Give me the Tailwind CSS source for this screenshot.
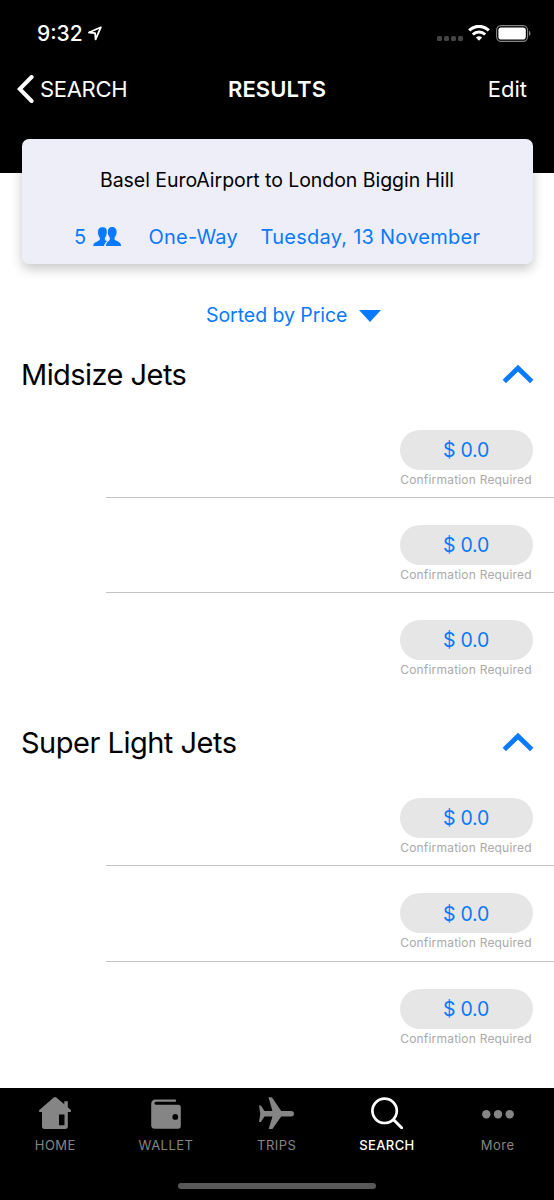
<!DOCTYPE html>
<html lang="en">
<head>
<meta charset="utf-8">
<meta name="viewport" content="width=device-width, initial-scale=1">
<title>Results</title>
<script src="https://cdn.jsdelivr.net/npm/@tailwindcss/browser@4"></script>
</head>
<body class="bg-white">
<div class="flex h-[1200px] w-[554px] flex-col overflow-hidden bg-white font-['Inter','Liberation_Sans',sans-serif] text-black">

  <header class="h-[172.5px] shrink-0 bg-black text-white">
    <div class="flex h-[66px] items-center justify-between pr-[22px] pl-[37px]">
      <div class="flex items-center gap-[5px]">
        <span class="pt-px text-[21px] leading-6 font-medium">9:32</span>
        <svg class="h-[15px] w-[14px]" viewBox="0 0 14 15" fill="none" stroke="white" stroke-width="1.8" stroke-linejoin="round"><path d="M12.8 1.300.9 6.500l6.200.7.500 6.200z"/></svg>
      </div>
      <div class="flex items-center">
        <div class="mt-[11px] flex gap-[2px]">
          <i class="size-[5px] rounded-[1.5px] bg-[#444]"></i><i class="size-[5px] rounded-[1.5px] bg-[#444]"></i><i class="size-[5px] rounded-[1.5px] bg-[#444]"></i><i class="size-[5px] rounded-[1.5px] bg-[#444]"></i>
        </div>
        <svg class="ml-[5px] h-[16px] w-[22px]" viewBox="0 0 22 16" fill="none" stroke="white"><path stroke-width="3.2" d="M1.2 5.400a14 14 0 0 1 19.600 0"/><path stroke-width="3" d="M4.800 9.500a9 9 0 0 1 12.400 0"/><path fill="white" stroke="none" d="M7.900 12.600a4.600 4.600 0 0 1 6.200 0L11 15.800z"/></svg>
        <svg class="ml-[6px] h-[17px] w-[36px]" viewBox="0 0 36 17"><rect x=".6" y=".6" width="31" height="15.8" rx="4.6" fill="none" stroke="#858585" stroke-width="1.1"/><rect x="2.4" y="2.4" width="27.4" height="12.2" rx="2.8" fill="white"/><path d="M33 5.800a3 3 0 0 1 0 5.200z" fill="#858585"/></svg>
      </div>
    </div>
    <div class="grid h-[46px] grid-cols-3 items-center pr-[27px] pl-[17px] text-[22px] leading-7">
      <div class="flex items-center gap-[6px]">
        <svg class="h-[29px] w-[17px] shrink-0" viewBox="0 0 17 29" fill="none" stroke="white" stroke-width="4" stroke-linecap="round"><path d="M14.600 2 2.700 14l11.900 12"/></svg>
        <span class="tracking-[-0.3px]">SEARCH</span>
      </div>
      <h1 class="pl-[10px] text-center font-semibold tracking-[0.1px]">RESULTS</h1>
      <span class="text-right">Edit</span>
    </div>
  </header>

  <main class="flex-1">
    <section class="mx-[21.5px] -mt-[33.5px] h-[125px] rounded-[7px] bg-[#eeeef8] pt-[28px] shadow-[0_5px_12px_rgba(0,0,0,0.22)]">
      <p class="text-center text-[19.5px] leading-[26px] tracking-[-0.05px]">Basel EuroAirport to London Biggin Hill</p>
      <div class="mt-[31px] flex items-center pl-[52.5px] text-[20px] leading-[26px] tracking-[0.25px] text-[#087aff]">
        <span>5</span>
        <svg class="-mt-px ml-[7px] h-[19px] w-[28px]" viewBox="0 0 28 19" fill="currentColor"><path d="M18.800 0c3.200 0 5 2 4.800 5.200-.1 2-.7 3.700-2 5.200v2.100c0 1 5.900 2 6.400 5.500v1H13c0-4.300 3.800-5.200 3.800-6.500v-2.100c-1.300-1.500-1.900-3.200-2-5.200C14.600 2 16.200 0 18.800 0z"/><path stroke="#eeeef8" stroke-width="1" d="M9.600-.3c3.200 0 4.900 2 4.700 5.500-.1 2.300-.7 4-1.900 5.400v2c0 .7 1 1.200 2.300 1.700-2 1.200-3 2.700-3.200 5.200H-.4c0-5 6.700-5.700 6.700-7v-1.900C5.100 9.200 4.600 7.500 4.500 5.200 4.300 1.700 6.400-.3 9.600-.3z"/></svg>
        <span class="ml-[27px]">One-Way</span>
        <span class="ml-[22.5px] whitespace-nowrap">Tuesday, 13 November</span>
      </div>
    </section>

    <div class="flex h-[76px] items-start pt-[38px] pl-[206px] text-[19.5px] leading-[26px] tracking-[-0.05px] text-[#087aff]">
      <span>Sorted by Price</span>
      <svg class="mt-[8px] ml-[12px] h-[12px] w-[22px]" viewBox="0 0 22 12" fill="currentColor"><path d="M0 0h22L11 12z"/></svg>
    </div>

    <div class="flex flex-col gap-5">
      <section>
        <div class="flex h-[63px] items-start justify-between pt-[17px] pr-[20px] pl-[21px]">
          <h2 class="text-[29px] leading-9 tracking-[-0.55px]">Midsize Jets</h2>
          <svg class="mt-[7px] h-[20px] w-[32px] text-[#087aff]" viewBox="0 0 32 20" fill="none" stroke="currentColor" stroke-width="4.800"><path d="M2.300 17.500 16 4.200l13.700 13.300"/></svg>
        </div>
        <ul>
          <li class="ml-[106px] flex h-[95px] flex-col items-end border-b border-[#c4c4c6] pt-[27px] pr-[21.5px]"><button class="h-[40px] w-[133px] rounded-full bg-[#e6e6e6] pt-[2px] text-[19.5px] tracking-[-0.2px] text-[#087aff]">$ 0.0</button><span class="w-[133px] text-center text-[12px] leading-5 tracking-[0.2px] whitespace-nowrap text-[#aaa]">Confirmation Required</span></li>
          <li class="ml-[106px] flex h-[95px] flex-col items-end border-b border-[#c4c4c6] pt-[27px] pr-[21.5px]"><button class="h-[40px] w-[133px] rounded-full bg-[#e6e6e6] pt-[2px] text-[19.5px] tracking-[-0.2px] text-[#087aff]">$ 0.0</button><span class="w-[133px] text-center text-[12px] leading-5 tracking-[0.2px] whitespace-nowrap text-[#aaa]">Confirmation Required</span></li>
          <li class="ml-[106px] flex h-[95px] flex-col items-end pt-[27px] pr-[21.5px]"><button class="h-[40px] w-[133px] rounded-full bg-[#e6e6e6] pt-[2px] text-[19.5px] tracking-[-0.2px] text-[#087aff]">$ 0.0</button><span class="w-[133px] text-center text-[12px] leading-5 tracking-[0.2px] whitespace-nowrap text-[#aaa]">Confirmation Required</span></li>
        </ul>
      </section>
      <section>
        <div class="flex h-[63px] items-start justify-between pt-[17px] pr-[20px] pl-[21px]">
          <h2 class="text-[29px] leading-9 tracking-[-0.5px]">Super Light Jets</h2>
          <svg class="mt-[7px] h-[20px] w-[32px] text-[#087aff]" viewBox="0 0 32 20" fill="none" stroke="currentColor" stroke-width="4.800"><path d="M2.300 17.500 16 4.200l13.700 13.300"/></svg>
        </div>
        <ul>
          <li class="ml-[106px] flex h-[95.3px] flex-col items-end border-b border-[#c4c4c6] pt-[27px] pr-[21.5px]"><button class="h-[40px] w-[133px] rounded-full bg-[#e6e6e6] pt-[2px] text-[19.5px] tracking-[-0.2px] text-[#087aff]">$ 0.0</button><span class="w-[133px] text-center text-[12px] leading-5 tracking-[0.2px] whitespace-nowrap text-[#aaa]">Confirmation Required</span></li>
          <li class="ml-[106px] flex h-[95.3px] flex-col items-end border-b border-[#c4c4c6] pt-[27px] pr-[21.5px]"><button class="h-[40px] w-[133px] rounded-full bg-[#e6e6e6] pt-[2px] text-[19.5px] tracking-[-0.2px] text-[#087aff]">$ 0.0</button><span class="w-[133px] text-center text-[12px] leading-5 tracking-[0.2px] whitespace-nowrap text-[#aaa]">Confirmation Required</span></li>
          <li class="ml-[106px] flex h-[95px] flex-col items-end pt-[27px] pr-[21.5px]"><button class="h-[40px] w-[133px] rounded-full bg-[#e6e6e6] pt-[2px] text-[19.5px] tracking-[-0.2px] text-[#087aff]">$ 0.0</button><span class="w-[133px] text-center text-[12px] leading-5 tracking-[0.2px] whitespace-nowrap text-[#aaa]">Confirmation Required</span></li>
        </ul>
      </section>
    </div>
  </main>

  <footer class="flex h-[112px] shrink-0 flex-col items-center bg-black">
    <nav class="grid w-full grid-cols-5 pr-[0.5px] text-[13px] leading-4 tracking-[0.5px] text-[#858585]">
      <a class="flex flex-col items-center gap-[8px] pt-[9px]">
        <svg class="h-[32px] w-[32px]" viewBox="0 0 32 32" fill="currentColor"><path fill-rule="evenodd" d="M14.700.4q1.300-.8 2.600 0l8 6.800V4.300h3.500v6l3 2.700c.9 1.300-.2 2.400-1.700 2h-1.300v14.500c0 1.500-.8 2.500-2.500 2.500H5.500C3.800 32 3 31 3 29.500V15H1.700C.2 15-.6 14 .4 12.900zM20 17.500v10.700h5.500V17.500z"/></svg>
        <span>HOME</span>
      </a>
      <a class="flex flex-col items-center gap-[8px] pt-[9px]">
        <svg class="h-[32px] w-[30px]" viewBox="0 0 30 32" fill="currentColor"><path fill-rule="evenodd" d="M4.500 2.500H24c1.600 0 1.600 2.300 0 2.300H5c-2 0-2 3 0 3h22.200c1.600 0 2.600 1 2.600 2.500v19c0 1.500-1 2.500-2.600 2.500H3.800C1.500 31.800.2 30.500.2 28.500V7c0-3 1.600-4.500 4.300-4.500zM24.300 17a2.900 2.900 0 1 0 0 5.800 2.900 2.900 0 0 0 0-5.800z"/></svg>
        <span>WALLET</span>
      </a>
      <a class="flex flex-col items-center gap-[8px] pt-[9px]">
        <svg class="h-[32px] w-[35px]" viewBox="0 0 35 32" fill="currentColor"><path d="M9.500.2h2.700q.7 0 1.200.8l8.800 13h9.800c4 0 4 5.600 0 5.600h-9.800l-8.800 12.300q-.5.700-1.200.7H9.500l3.900-13H5.500L1.800 25H0l1.300-8.200L0 8.500h1.800L5.500 14h7.900z"/></svg>
        <span>TRIPS</span>
      </a>
      <a class="flex flex-col items-center gap-[8px] pt-[9px] pr-[1px] font-medium text-white">
        <svg class="h-[32px] w-[32px]" viewBox="0 0 32 32" fill="none" stroke="currentColor" stroke-width="2.700" stroke-linecap="round"><circle cx="13.600" cy="13.800" r="12.200"/><path d="m22.600 22.800 8 8" stroke-width="3"/></svg>
        <span class="tracking-[0.4px]">SEARCH</span>
      </a>
      <a class="flex flex-col items-center gap-[8px] pt-[9px] pr-[1px]">
        <svg class="h-[32px] w-[32px]" viewBox="0 0 32 32" fill="currentColor"><circle cx="4.300" cy="17.300" r="4.200"/><circle cx="16" cy="17.300" r="4.200"/><circle cx="27.700" cy="17.300" r="4.200"/></svg>
        <span>More</span>
      </a>
    </nav>
    <div class="mt-[30px] h-[6px] w-[198px] rounded-full bg-[#585858]"></div>
  </footer>
</div>
</body>
</html>
